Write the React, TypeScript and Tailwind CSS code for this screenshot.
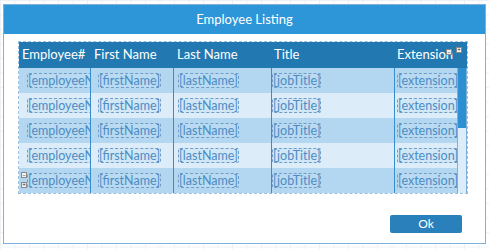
const rows = [0, 1, 2, 3, 4];

const font = { fontFamily: 'Lato, "Liberation Sans", sans-serif' };

function Field({ text }: { text: string }) {
    return (
        <span className="inline-block whitespace-nowrap rounded-[2px] border border-dashed border-[#6f9dc8] bg-[#c4def2]/40 text-[12.5px] leading-[13px] text-[#4b8cc6]">
            {text}
        </span>
    );
}

function Handle({ sign }: { sign: string }) {
    return (
        <span className="flex h-[6px] w-[6px] items-center justify-center border border-[#8a8a8a] bg-[#f2f2f2] text-[6px] leading-none text-[#333]">
            {sign}
        </span>
    );
}

export default function App() {
    return (
        <div
            style={font}
            className="h-[249px] w-[489px] bg-white bg-[linear-gradient(to_right,#edf1f5_1px,transparent_1px),linear-gradient(to_bottom,#edf1f5_1px,transparent_1px)] bg-[size:14.5px_14.5px] pl-[3px] pt-[4px]"
        >
            <div className="flex h-[240px] w-[483px] flex-col border border-[#7db1dc] bg-white">
                <div className="flex h-[29px] items-center justify-center bg-[#2d96d8] text-[13px] text-white">
                    Employee Listing
                </div>

                <div className="relative ml-[14px] mt-[7px] w-[450px] border border-dashed border-[#9cc1de]">
                    <div className="grid h-[26px] grid-cols-[72px_83px_98px_123px_74px] items-center bg-[#2279b1] text-[13px] text-white">
                        <span className="overflow-hidden whitespace-nowrap pl-[3px]">Employee#</span>
                        <span className="pl-[3px]">First Name</span>
                        <span className="pl-[3px]">Last Name</span>
                        <span className="pl-[2px]">Title</span>
                        <span className="pl-[2px]">Extension</span>
                    </div>
                    <div className="absolute right-[5px] top-[5px] flex gap-[4px]">
                        <span className="mt-[2px]"><Handle sign="−" /></span>
                        <Handle sign="+" />
                    </div>

                    <div className="flex">
                        <div className="w-[438px]">
                            {rows.map((r) => (
                                <div
                                    key={r}
                                    className={`grid h-[25px] grid-cols-[72px_83px_98px_123px_62px] items-center ${r % 2 === 0 ? "bg-[#b3d7f0]" : "bg-[#dcedf9]"}`}
                                >
                                    <div className="flex h-full items-center overflow-hidden border-r border-[#3a8dcc] pl-[8px]">
                                        <Field text="[employeeNumber]" />
                                    </div>
                                    <div className="flex h-full items-center overflow-hidden border-r border-[#3a8dcc] pl-[7px]">
                                        <Field text="[firstName]" />
                                    </div>
                                    <div className="flex h-full items-center overflow-hidden border-r border-[#3a8dcc] pl-[4px]">
                                        <Field text="[lastName]" />
                                    </div>
                                    <div className="flex h-full items-center overflow-hidden border-r border-[#3a8dcc]">
                                        <Field text="[jobTitle]" />
                                    </div>
                                    <div className="flex h-full items-center overflow-hidden pl-[2px]">
                                        <Field text="[extension]" />
                                    </div>
                                </div>
                            ))}
                        </div>
                        <div className="flex w-[11px] flex-col border-x border-[#7db1dc] bg-[#dcedf9]">
                            <div className="h-[60px] bg-[#2d8fd2]" />
                        </div>
                    </div>

                    <div className="absolute bottom-[5px] left-[2px] flex flex-col gap-[4px]">
                        <Handle sign="−" />
                        <Handle sign="+" />
                    </div>
                </div>

                <div className="mr-[23px] mt-[21px] flex justify-end">
                    <button className="h-[18px] w-[72px] rounded-[2px] bg-[#2a80ba] text-[12px] text-white">
                        Ok
                    </button>
                </div>
            </div>
        </div>
    );
}
